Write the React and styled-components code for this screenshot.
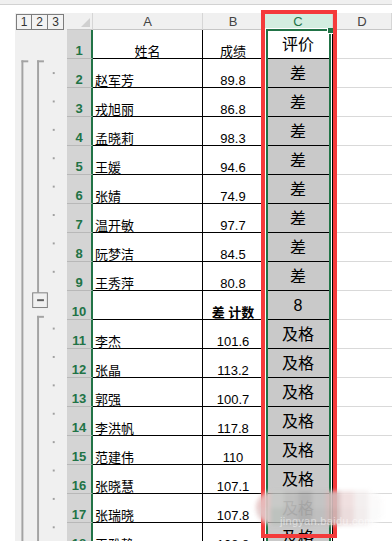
import React from 'react';
import styled, { createGlobalStyle } from 'styled-components';

const GlobalStyle = createGlobalStyle`
  html, body {
    margin: 0;
    padding: 0;
    background: #fff;
  }
  body {
    font-family: "Liberation Sans", "Noto Sans CJK SC", sans-serif;
  }
`;

const Page = styled.div`
  position: relative;
  width: 392px;
  height: 556px;
  overflow: hidden;
  background: #fff;
`;

const TopBar = styled.div`
  height: 4px;
  background: #f0f0f0;
  border-bottom: 1px solid #d2d2d2;
  margin-bottom: 8px;
`;

const Sheet = styled.div`
  display: flex;
  margin-left: 15px;
  height: 528px;
  overflow: hidden;
`;

const Gutter = styled.div`
  width: 52px;
  flex: none;
  background: #f0f0f0;
  display: flex;
  flex-direction: column;
`;

const LevelRow = styled.div`
  height: 17px;
  flex: none;
  display: flex;
  padding: 1px 0 0 1px;
  box-sizing: border-box;
`;

const LevelButton = styled.div`
  width: 16px;
  height: 16px;
  box-sizing: border-box;
  border: 1px solid #7d7d7d;
  display: flex;
  align-items: center;
  justify-content: center;
  font-size: 12px;
  line-height: 1;
  color: #333;
  background: #f3f3f3;
  & + & {
    border-left: none;
  }
`;

const Grid = styled.div`
  flex: 1;
  display: grid;
  grid-template-columns: 26px 110px 61px 69px 1fr;
  grid-template-rows: 17px;
  grid-auto-rows: 29px;
  align-content: start;
`;

const Corner = styled.div`
  position: relative;
  box-sizing: border-box;
  background: #f0f0f0;
  border-bottom: 1px solid #c6c6c6;
  border-right: 1px solid #d6d6d6;
  &::after {
    content: '';
    position: absolute;
    right: 2px;
    bottom: 2px;
    width: 0;
    height: 0;
    border-style: solid;
    border-width: 0 0 9px 9px;
    border-color: transparent transparent #d0d0d0 transparent;
  }
`;

const ColHead = styled.div`
  box-sizing: border-box;
  display: flex;
  align-items: center;
  justify-content: center;
  background: ${(p) => (p.$active ? '#d3eee0' : '#f0f0f0')};
  color: ${(p) => (p.$active ? '#217346' : '#444')};
  border-right: 1px solid #d6d6d6;
  border-bottom: 1px solid ${(p) => (p.$active ? '#217346' : '#c6c6c6')};
  font-size: 13px;
  line-height: 1;
  padding-top: 1px;
`;

const RowHead = styled.div`
  box-sizing: border-box;
  display: flex;
  align-items: flex-end;
  justify-content: center;
  background: #d4d4d4;
  color: #217346;
  font-size: 13px;
  font-weight: 700;
  line-height: 1;
  border-bottom: 1px solid #b8b8b8;
  border-right: 2px solid #217346;
  padding-bottom: 1px;
`;

const Cell = styled.div`
  box-sizing: border-box;
  display: flex;
  align-items: flex-end;
  justify-content: ${(p) => (p.$left ? 'flex-start' : 'center')};
  padding: 0 2px;
  border-bottom: 1px solid #000;
  border-right: 1px solid #000;
  font-size: 13px;
  line-height: 1;
  color: #000;
  font-weight: ${(p) => (p.$bold ? 700 : 400)};
  white-space: nowrap;
`;

const GradeCell = styled(Cell)`
  align-items: center;
  background: ${(p) => (p.$plain ? '#fff' : '#c9c9c9')};
  font-size: 16px;
  padding-top: 1px;
`;

const BlankCell = styled.div`
  box-sizing: border-box;
  border-bottom: 1px solid #d9d9d9;
`;

const Selection = styled.div`
  position: absolute;
  left: 266px;
  top: 29px;
  width: 65px;
  height: 512px;
  box-sizing: border-box;
  border: 2px solid #217346;
  border-bottom: none;
  box-shadow: 0 0 0 1px #fff;
`;

const FillHandle = styled.div`
  position: absolute;
  left: 327px;
  top: 28px;
  width: 5px;
  height: 5px;
  background: #217346;
  border: 1px solid #fff;
  border-top: none;
`;

const RedBox = styled.div`
  position: absolute;
  left: 261px;
  top: 10px;
  width: 76px;
  height: 528px;
  box-sizing: border-box;
  border: 4px solid #f43b3b;
`;

const Watermark = styled.div`
  position: absolute;
  left: 256px;
  top: 491px;
  width: 128px;
  height: 34px;
`;

const Mosaic = styled.div`
  display: grid;
  grid-template-columns: repeat(9, 14px);
  grid-auto-rows: 17px;
  border-radius: 17px;
  overflow: hidden;
  filter: blur(2px);
  opacity: 0.92;
`;

const Tile = styled.div`
  background: ${(p) => p.$c};
`;

const MarkText = styled.div`
  position: absolute;
  left: 24px;
  top: 24px;
  font-size: 11px;
  color: rgba(255, 255, 255, 0.5);
  font-family: "Liberation Sans", sans-serif;
  letter-spacing: 0.3px;
`;

const rows = [
  ['姓名', '成绩', '评价', 'head'],
  ['赵军芳', '89.8', '差'],
  ['戎旭丽', '86.8', '差'],
  ['孟晓莉', '98.3', '差'],
  ['王媛', '94.6', '差'],
  ['张婧', '74.9', '差'],
  ['温开敏', '97.7', '差'],
  ['阮梦洁', '84.5', '差'],
  ['王秀萍', '80.8', '差'],
  ['', '差 计数', '8', 'total'],
  ['李杰', '101.6', '及格'],
  ['张晶', '113.2', '及格'],
  ['郭强', '100.7', '及格'],
  ['李洪帆', '117.8', '及格'],
  ['范建伟', '110', '及格'],
  ['张晓慧', '107.1', '及格'],
  ['张瑞晓', '107.8', '及格'],
  ['王雅静', '108.8', '及格'],
];

const tiles = [
  '#e6c4c4', '#c9cbc8', '#c0c0bf', '#b3b3b3', '#c4c4c4', '#d6bcbc', '#efdede', '#f3eeee', '#fbfafa',
  '#e3caca', '#bdc2be', '#b8b8b8', '#aeaeae', '#bfbfbf', '#cfb7b6', '#eadada', '#f1ecec', '#fafafa',
];

function OutlineBars() {
  const dots = [1, 2, 3, 4, 5, 6, 7, 8, 10, 11, 12, 13, 14, 15, 16, 17];
  return (
    <svg width="52" height="522" viewBox="0 0 52 522">
      <g fill="#a3a3a3">
        <rect x="6" y="31" width="2" height="491" />
        <rect x="6" y="31" width="7" height="2" />
        <rect x="22" y="31" width="2" height="237" />
        <rect x="22" y="31" width="7" height="2" />
        <rect x="22" y="292" width="2" height="230" />
        <rect x="22" y="292" width="7" height="2" />
      </g>
      {dots.map((i) => (
        <rect key={i} x="38" y={i * 29 + 14} width="2" height="2" fill="#a0a0a0" />
      ))}
      <rect x="17.5" y="268.5" width="15" height="15" fill="#f0f0f0" stroke="#7f7f7f" />
      <rect x="22" y="275" width="7" height="2" fill="#606060" />
    </svg>
  );
}

export default function App() {
  return (
    <Page>
      <GlobalStyle />
      <TopBar />
      <Sheet>
        <Gutter>
          <LevelRow>
            <LevelButton>1</LevelButton>
            <LevelButton>2</LevelButton>
            <LevelButton>3</LevelButton>
          </LevelRow>
          <OutlineBars />
        </Gutter>
        <Grid>
          <Corner />
          <ColHead>A</ColHead>
          <ColHead>B</ColHead>
          <ColHead $active>C</ColHead>
          <ColHead>D</ColHead>
          {rows.map(([name, score, grade, kind], i) => (
            <React.Fragment key={i}>
              <RowHead>{i + 1}</RowHead>
              <Cell $left={kind !== 'head'}>{name}</Cell>
              <Cell $bold={kind === 'total'}>{score}</Cell>
              <GradeCell $plain={kind === 'head'}>{grade}</GradeCell>
              <BlankCell />
            </React.Fragment>
          ))}
        </Grid>
      </Sheet>
      <Selection />
      <FillHandle />
      <RedBox />
      <Watermark>
        <Mosaic>
          {tiles.map((c, i) => (
            <Tile key={i} $c={c} />
          ))}
        </Mosaic>
        <MarkText>jingyan.baidu.com</MarkText>
      </Watermark>
    </Page>
  );
}
